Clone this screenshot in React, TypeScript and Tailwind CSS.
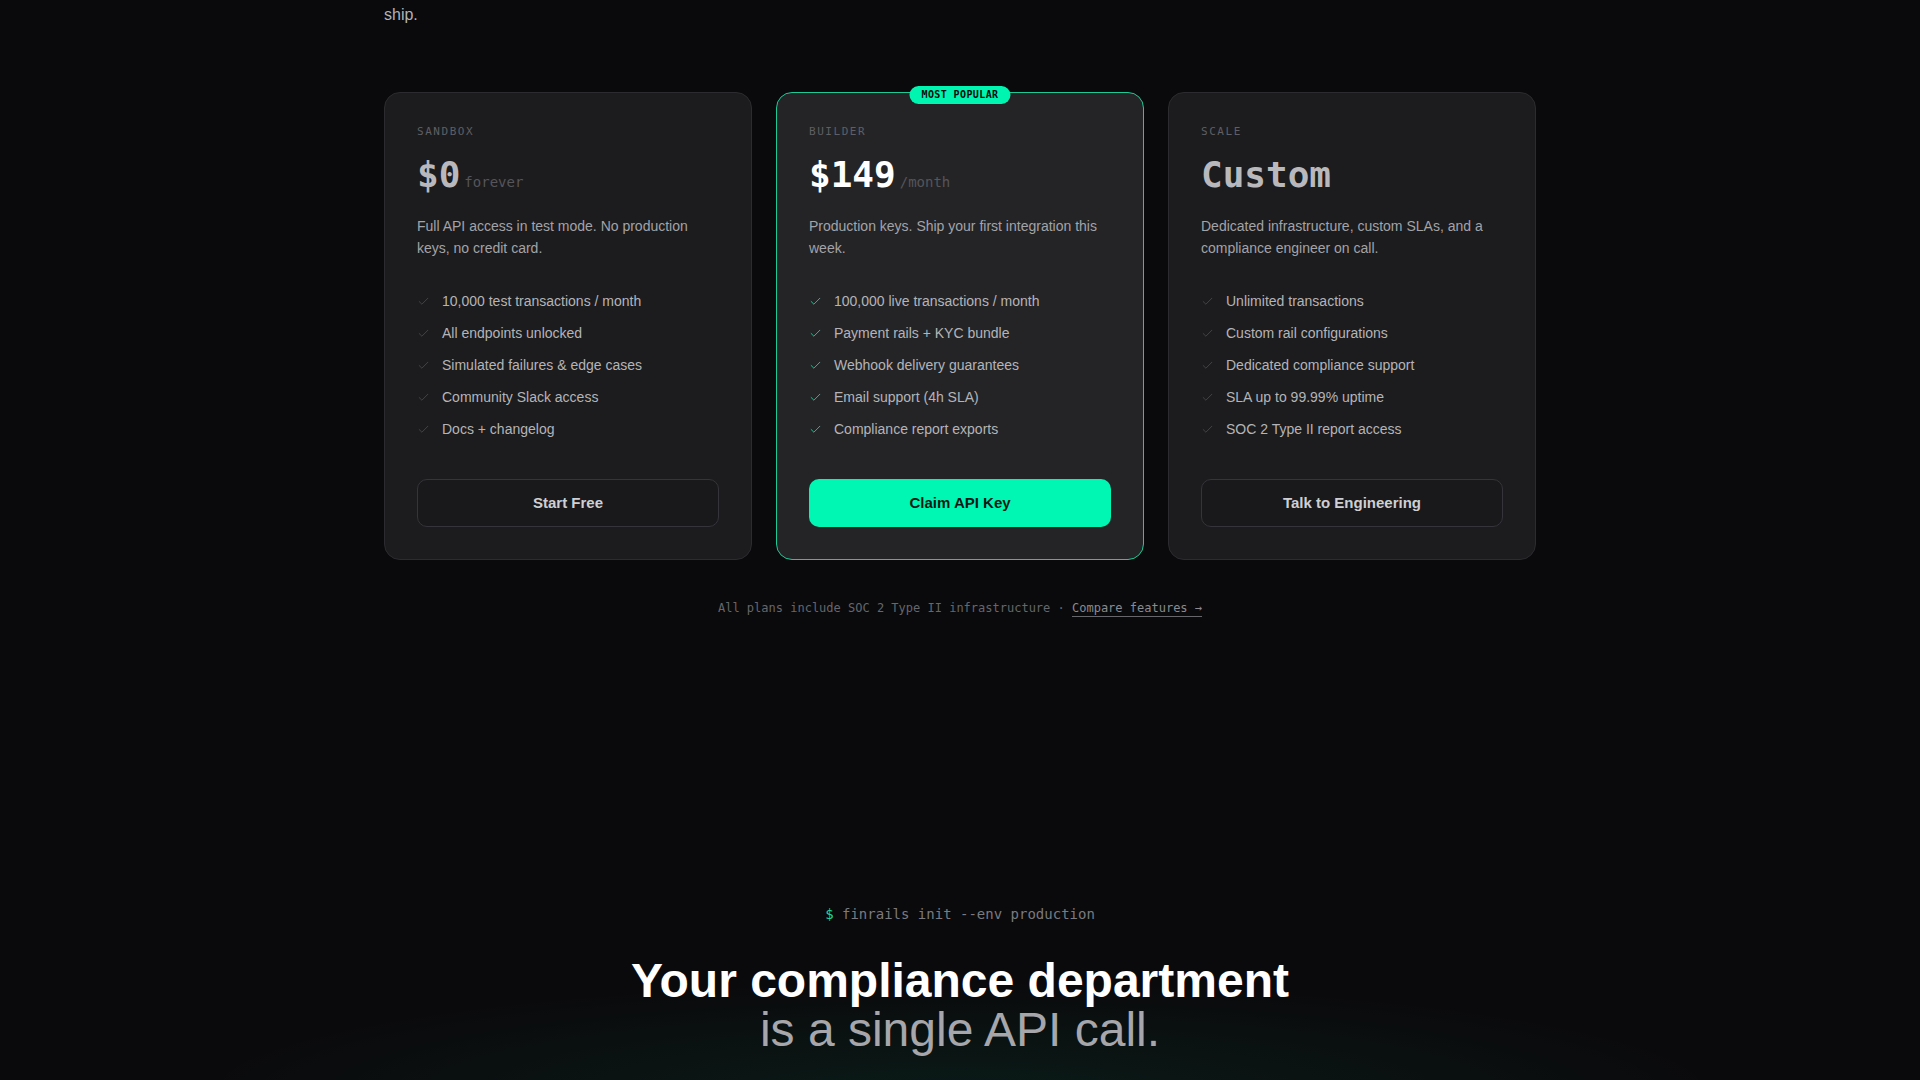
import { Check } from "lucide-react"

const mono = "font-['DejaVu_Sans_Mono','Liberation_Mono',monospace]"

type Plan = {
  name: string
  price: string
  unit?: string
  blurb: string
  features: string[]
  cta: string
  featured?: boolean
}

const plans: Plan[] = [
  {
    name: "Sandbox",
    price: "$0",
    unit: "forever",
    blurb: "Full API access in test mode. No production keys, no credit card.",
    features: [
      "10,000 test transactions / month",
      "All endpoints unlocked",
      "Simulated failures & edge cases",
      "Community Slack access",
      "Docs + changelog",
    ],
    cta: "Start Free",
  },
  {
    name: "Builder",
    price: "$149",
    unit: "/month",
    blurb: "Production keys. Ship your first integration this week.",
    features: [
      "100,000 live transactions / month",
      "Payment rails + KYC bundle",
      "Webhook delivery guarantees",
      "Email support (4h SLA)",
      "Compliance report exports",
    ],
    cta: "Claim API Key",
    featured: true,
  },
  {
    name: "Scale",
    price: "Custom",
    blurb: "Dedicated infrastructure, custom SLAs, and a compliance engineer on call.",
    features: [
      "Unlimited transactions",
      "Custom rail configurations",
      "Dedicated compliance support",
      "SLA up to 99.99% uptime",
      "SOC 2 Type II report access",
    ],
    cta: "Talk to Engineering",
  },
]

function PlanCard({ plan }: { plan: Plan }) {
  const hot = plan.featured
  return (
    <div
      className={
        hot
          ? "relative flex flex-col rounded-2xl border border-[#1fc995] bg-[#242427] p-8"
          : "relative flex flex-col rounded-2xl border border-[#2c2c30] bg-[#1c1c1e] p-8"
      }
    >
      {hot && (
        <span
          className={`absolute left-1/2 top-[-7px] -translate-x-1/2 rounded-full bg-[#00f5b0] px-3 py-[3px] text-[10px] font-bold leading-[12px] tracking-[0.04em] text-[#0a0a0c] ${mono}`}
        >
          MOST POPULAR
        </span>
      )}
      <div className={`text-[11px] uppercase leading-[14px] tracking-[0.14em] text-[#5f5f64] ${mono}`}>
        {plan.name}
      </div>
      <div className="mt-4 flex h-10 items-baseline gap-1 leading-10">
        <span
          className={`text-[36px] font-bold leading-10 ${mono} ${
            hot ? "text-white" : "text-[#b9b9bd]"
          }`}
        >
          {plan.price}
        </span>
        {plan.unit && (
          <span className={`text-[14px] leading-none text-[#55555a] ${mono}`}>{plan.unit}</span>
        )}
      </div>
      <p className="mt-5 text-[14px] leading-[22px] text-[#a3a3a8]">{plan.blurb}</p>
      <ul className="mt-8 flex flex-col gap-3">
        {plan.features.map((f) => (
          <li key={f} className="flex h-5 items-center gap-3 text-[14px] text-[#b4b4b8]">
            <Check
              size={13}
              strokeWidth={1.6}
              className={hot ? "text-[#1fd69f]" : "text-[#48484d]"}
            />
            {f}
          </li>
        ))}
      </ul>
      <button
        className={
          hot
            ? "mt-10 h-12 w-full rounded-[10px] bg-[#00f7b3] text-[15px] font-bold text-[#0c1a14]"
            : "mt-10 h-12 w-full rounded-[10px] border border-[#34343a] bg-[#19191b] text-[15px] font-bold text-[#cfcfd3]"
        }
      >
        {plan.cta}
      </button>
    </div>
  )
}

export default function App() {
  return (
    <div className="min-h-screen overflow-hidden bg-[#0a0a0c] font-['Liberation_Sans',Arial,sans-serif]">
      {/* Pricing */}
      <section className="mx-auto w-[1152px]">
        <p className="mt-[2px] text-[16px] leading-[26px] text-[#b3b3b8]">ship.</p>

        <div className="mt-16 grid grid-cols-3 gap-6">
          {plans.map((p) => (
            <PlanCard key={p.name} plan={p} />
          ))}
        </div>

        <p className={`mt-10 text-center text-[12px] leading-4 text-[#66666b] ${mono}`}>
          All plans include SOC 2 Type II infrastructure ·{" "}
          <a className="text-[#8a8a90] underline decoration-[#66666b] underline-offset-4">
            Compare features →
          </a>
        </p>
      </section>

      {/* CTA */}
      <section className="mt-[288px] bg-[radial-gradient(ellipse_40%_60%_at_50%_100%,rgba(0,245,176,0.07),transparent)] pb-10 text-center">
        <p className={`text-[14px] leading-5 text-[#7a7a80] ${mono}`}>
          <span className="text-[#1fd69f]">$</span> finrails init --env production
        </p>
        <h2 className="mt-8 text-[48px] font-bold leading-[49px] text-white">
          Your compliance department
          <br />
          <span className="font-normal text-[#a6a6ab]">is a single API call.</span>
        </h2>
      </section>
    </div>
  )
}
